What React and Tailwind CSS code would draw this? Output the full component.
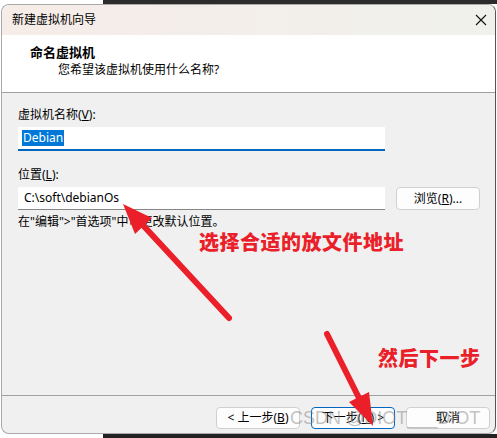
import React from "react";

const cjk = { fontFamily: '"Noto Sans", "Noto Sans CJK SC", sans-serif' };

function Btn({ children, focused, className = "" }) {
  return (
    <div
      className={`w-[84px] h-[22px] rounded-[4px] flex items-center justify-center text-[12px] text-black leading-none whitespace-nowrap ${
        focused ? "border border-[#0067c0] bg-[#fdfdfd]" : "border border-[#d0d0d0] bg-[#fdfdfd]"
      } ${className}`}
    >
      {children}
    </div>
  );
}

export default function App() {
  return (
    <div className="w-[497px] h-[438px] bg-white relative overflow-hidden flex flex-col" style={cjk}>
      <div className="h-[4px] flex shrink-0">
        <div className="w-[103px] bg-white" />
        <div className="flex-1 bg-[#2c2c2c]" />
      </div>

      <div className="ml-[1px] w-[495px] h-[430px] flex flex-col border border-[#a9a9a9] border-r-[#555] rounded-[8px] overflow-hidden bg-[#f0f0f0] shrink-0">
        {/* Title bar */}
        <div className="h-[30px] shrink-0 flex items-center justify-between pl-[10px] pr-[6px] bg-gradient-to-r from-[#f6ece8] to-[#f0f1ec]">
          <span className="text-[12px] text-black">新建虚拟机向导</span>
          <svg width="12" height="12" viewBox="0 0 12 12" className="mr-[2px]">
            <path d="M1 1 L11 11 M11 1 L1 11" stroke="#111" strokeWidth="1.1" />
          </svg>
        </div>

        {/* Header */}
        <div className="h-[58px] shrink-0 bg-white border-b border-[#a0a0a0] pt-[8px]">
          <div className="pl-[28px] text-[13px] font-bold text-black leading-[18px]">命名虚拟机</div>
          <div className="pl-[56px] text-[12px] text-black leading-[16px] mt-[1px]">您希望该虚拟机使用什么名称?</div>
        </div>

        {/* Body */}
        <div className="h-[303px] shrink-0 border-b border-[#a0a0a0] pt-[14px] pl-[16px]">
          <div className="text-[12px] leading-[16px] text-black">
            虚拟机名称(<span className="underline">V</span>):
          </div>
          <div className="mt-[4px] w-[367px] h-[24px] bg-white border-b-2 border-[#0067c0] flex items-center pl-[4px]">
            <span className="bg-[#0078d7] text-white text-[12px] leading-[16px] px-[1px]">Debian</span>
          </div>

          <div className="mt-[16px] text-[12px] leading-[16px] text-black">
            位置(<span className="underline">L</span>):
          </div>
          <div className="mt-[4px] flex items-center gap-[11px]">
            <div className="w-[367px] h-[23px] bg-white border-b border-[#868686] flex items-center pl-[6px]">
              <span className="text-[12px] leading-[16px] text-black">C:\soft\debianOs</span>
            </div>
            <Btn className="h-[23px]">
              浏览(<span className="underline">R</span>)...
            </Btn>
          </div>
          <div className="mt-[4px] text-[12px] leading-[16px] text-black">
            在"编辑"&gt;"首选项"中可更改默认位置。
          </div>
        </div>

        {/* Footer */}
        <div className="flex-1 flex justify-end items-start gap-[11px] pt-[11px] pr-[5px]">
          <Btn>
            &lt; 上一步(<span className="underline">B</span>)
          </Btn>
          <Btn focused>
            下一步(<span className="underline">N</span>) &gt;
          </Btn>
          <Btn>取消</Btn>
        </div>
      </div>

      <div className="h-[4px] flex shrink-0">
        <div className="w-[103px] bg-white" />
        <div className="flex-1 bg-[#222]" />
      </div>

      {/* Annotations */}
      <div className="absolute left-[199px] top-[231px] whitespace-nowrap text-[20px] font-black text-[#ea1f2a] leading-[24px] tracking-[0.5px]">
        选择合适的放文件地址
      </div>
      <div className="absolute left-[378px] top-[347px] whitespace-nowrap text-[20px] font-black text-[#ea1f2a] leading-[24px] tracking-[0.5px]">
        然后下一步
      </div>
      <div
        className="absolute left-[290px] top-[407px] whitespace-nowrap text-[18px] text-[#8a8a8a] opacity-50 leading-[22px]"
        style={{ fontFamily: '"Liberation Sans", sans-serif' }}
      >
        CSDN @DIOT___DIOT
      </div>
      <svg className="absolute left-0 top-0 pointer-events-none" width="497" height="438" viewBox="0 0 497 438">
        <line x1="229" y1="318" x2="140" y2="222" stroke="#ea1f2a" strokeWidth="6" strokeLinecap="round" />
        <polygon points="123,204 152,218 135,234" fill="#ea1f2a" />
        <line x1="327" y1="334" x2="361" y2="402" stroke="#ea1f2a" strokeWidth="6" strokeLinecap="round" />
        <polygon points="373,426 369,392 349,402" fill="#ea1f2a" />
      </svg>
    </div>
  );
}
